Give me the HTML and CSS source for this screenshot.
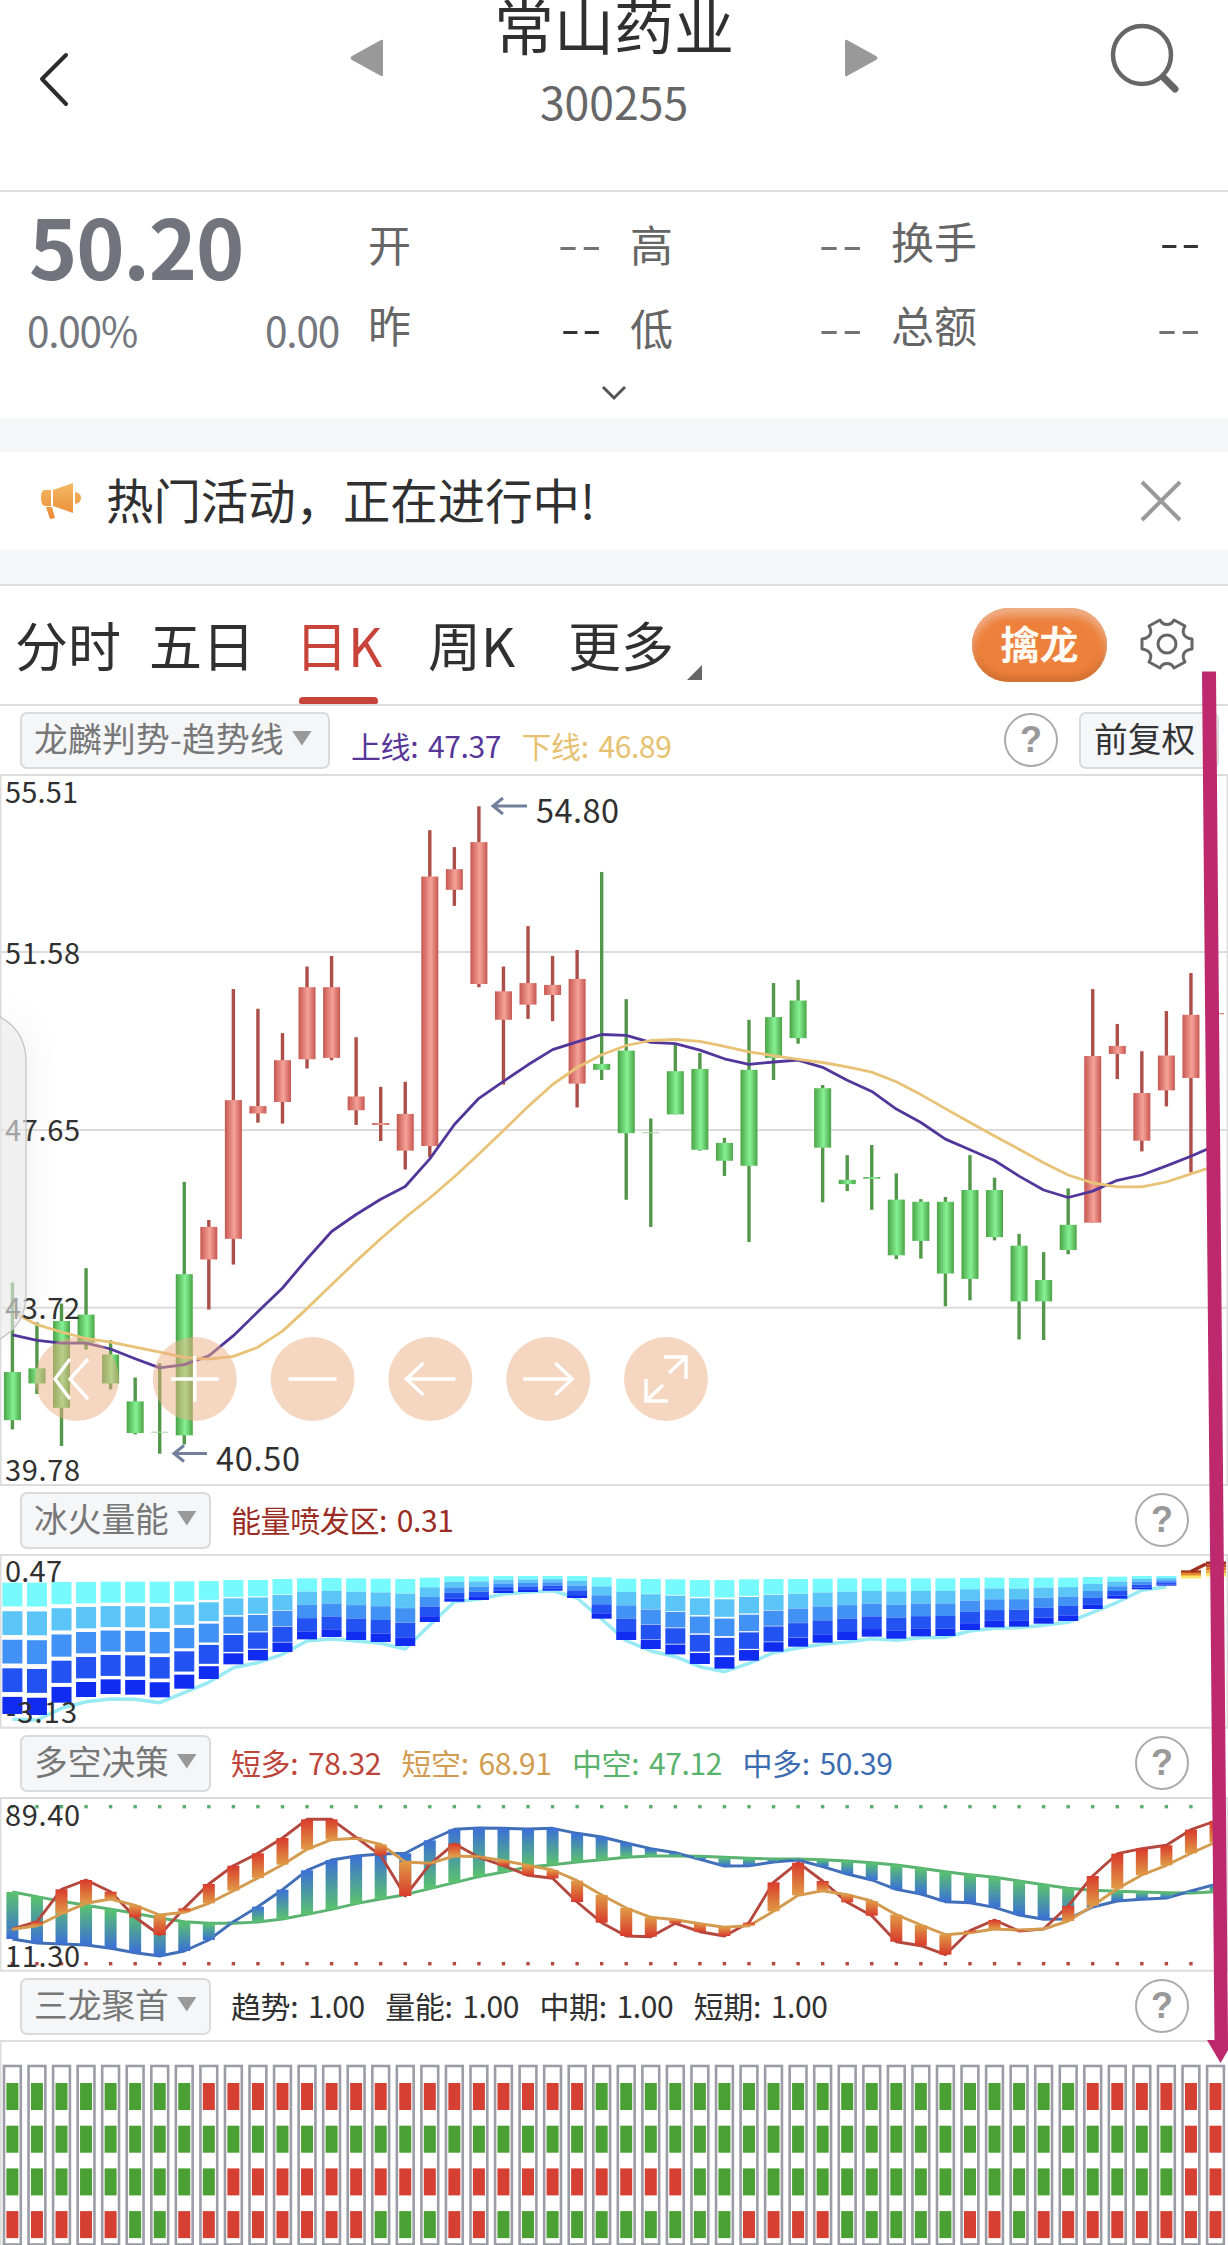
FILE: index.html
```html
<!DOCTYPE html>
<html lang="zh-CN">
<head>
<meta charset="utf-8">
<title>常山药业 300255</title>
<link rel="stylesheet" href="styles.css">
</head>
<body>
<div class="app">
  <header class="top">
    <svg class="back" viewBox="0 0 32 56"><path d="M28 4 4 28 28 53" /></svg>
    <svg class="tri" viewBox="0 0 36 40"><path d="M34 3v34q0 2-2 1L3 22q-3-2 0-4L32 2q2-1 2 1z"/></svg>
    <div class="name"><h1>常山药业</h1><p>300255</p></div>
    <svg class="tri" viewBox="0 0 36 40"><path d="M2 3v34q0 2 2 1l29-16q3-2 0-4L4 2Q2 1 2 3z"/></svg>
    <svg class="search" viewBox="0 0 72 72"><circle cx="33" cy="33" r="29"/><path class="grip" d="M55 56l11 11"/></svg>
  </header>

  <section class="quote">
    <div class="last">
      <strong>50.20</strong>
      <div class="change"><span>0.00%</span><span>0.00</span></div>
    </div>
    <dl class="stats">
      <div><dt class="low">开</dt><dd>--</dd></div>
      <div><dt class="low">高</dt><dd>--</dd></div>
      <div><dt>换手</dt><dd class="dark up">--</dd></div>
      <div><dt>昨</dt><dd class="dark">--</dd></div>
      <div><dt class="low">低</dt><dd>--</dd></div>
      <div><dt>总额</dt><dd>--</dd></div>
    </dl>
    <svg class="expand" viewBox="0 0 28 18"><path d="M3 3l11 11L25 3"/></svg>
  </section>

  <section class="notice">
    <svg class="horn" viewBox="0 0 44 40">
      <defs><linearGradient id="hornFill" x1="0" y1="0" x2="0" y2="1"><stop offset="0" stop-color="#f3b863"/><stop offset="1" stop-color="#ec8a35"/></linearGradient></defs>
      <path fill="url(#hornFill)" d="M5 9h7v16H6q-4-1-4-8t3-8zM14 9 34 2v30L14 25zM36 11q6 1 6 6t-6 6zM7 26h6l3 11-5 1q-2-6-4-12z"/>
    </svg>
    <p>热门活动，正在进行中!</p>
    <svg class="close" viewBox="0 0 44 44"><path d="M3 3l38 38M41 3 3 41"/></svg>
  </section>

  <nav class="tabs">
    <span class="t1">分时</span><span class="t2">五日</span><span class="t3 on">日K</span><span class="t4">周K</span><span class="t5">更多</span>
    <i class="corner"></i>
    <b class="pill">擒龙</b>
    <svg class="gear" viewBox="-28 -28 56 56">
      <path d="M7-24 18-18C14-11 17-6 25-5V5C17 6 14 11 18 18L7 24C4 18-4 18-7 24L-18 18C-14 11-17 6-25 5V-5C-17-6-14-11-18-18L-7-24C-4-18 4-18 7-24Z"/><circle r="9"/>
    </svg>
  </nav>

  <div class="head first">
    <span class="chip wide">龙麟判势-趋势线<i></i></span>
    <div class="legend"><span class="violet">上线: 47.37</span><span class="gold">下线: 46.89</span></div>
    <span class="help">?</span><span class="chip adj">前复权</span>
  </div>
  <svg class="chart" id="kline" viewBox="0 774 1228 712" height="712"></svg>

  <div class="head">
    <span class="chip">冰火量能<i></i></span>
    <div class="legend"><span class="brick">能量喷发区: 0.31</span></div>
    <span class="help">?</span>
  </div>
  <svg class="chart" id="energy" viewBox="0 1554 1228 175" height="175"></svg>

  <div class="head">
    <span class="chip">多空决策<i></i></span>
    <div class="legend"><span class="red">短多: 78.32</span><span class="amber">短空: 68.91</span><span class="green">中空: 47.12</span><span class="blue">中多: 50.39</span></div>
    <span class="help">?</span>
  </div>
  <svg class="chart" id="decide" viewBox="0 1797 1228 175" height="175"></svg>

  <div class="head">
    <span class="chip">三龙聚首<i></i></span>
    <div class="legend"><span>趋势: 1.00</span><span>量能: 1.00</span><span>中期: 1.00</span><span>短期: 1.00</span></div>
    <span class="help">?</span>
  </div>
  <svg class="chart" id="dragons" viewBox="0 2040 1228 205" height="205"></svg>

  <svg class="marker" viewBox="0 0 1228 2245"><path d="M1202 671.5H1216L1228 2040H1234L1220.5 2063 1207 2040H1214.5Z"/></svg>
</div>
<script src="charts.js"></script>
</body>
</html>
```
FILE: styles.css
```css
* { box-sizing: border-box; }
body { margin: 0; background: #fff; color: #303030; font-family: "Noto Sans CJK SC", "Noto Sans", sans-serif; }
h1, p, dl, dd { margin: 0; font-weight: 400; }
svg { display: block; flex: none; }
.app { position: relative; width: 1228px; height: 2245px; overflow: hidden; }

.top { display: flex; height: 192px; border-bottom: 2px solid #dcdcdc; align-items: flex-start; }
.back { width: 32px; height: 56px; margin: 51px 0 0 38px; fill: none; stroke: #2c2c2c; stroke-width: 4; stroke-linecap: round; stroke-linejoin: round; }
.tri { width: 36px; height: 40px; fill: #999; margin: 38px 0 0 279px; }
.name { width: 240px; margin: -20px 0 0 109px; text-align: center; }
.name h1 { font-size: 60px; line-height: 88px; white-space: nowrap; }
.name p { font-size: 44.5px; line-height: 66px; color: #666; }
.name + .tri { margin-left: 109px; }
.search { width: 72px; height: 72px; margin: 22px 0 0 230px; fill: none; stroke: #666; stroke-width: 4.5; }
.search .grip { stroke-width: 7; stroke-linecap: round; }

.quote { display: grid; grid-template-columns: 368px 1fr; grid-template-rows: 190px 36px; height: 226px; color: #666; }
.last strong { display: block; height: 109px; padding: 12px 0 0 29px; font-size: 82px; line-height: 82px; color: #71747c; letter-spacing: -1.2px; }
.change { display: flex; justify-content: space-between; padding: 0 29px 0 27px; font-size: 40.5px; line-height: 58px; color: #73767d; letter-spacing: -1.2px; }
.stats { display: grid; grid-template-columns: 231px 261px 338px; grid-template-rows: 84px 84px; padding-top: 8px; font-size: 43px; }
.stats div { display: flex; justify-content: space-between; line-height: 84px; white-space: nowrap; }
.stats div:nth-child(3n+2) dt { padding-left: 31px; }
.stats div:nth-child(3n) dt { padding-left: 31px; }
.stats dt { line-height: 81px; }
.stats dt.low { line-height: 86px; }
.stats dd { color: #737373; letter-spacing: 2px; margin-right: -4px; line-height: 84px; transform: scaleX(1.38); transform-origin: calc(100% - 4px) 50%; }
.stats dd.dark { color: #333; transform: scaleX(1.28); }
.stats dd.up { line-height: 80px; }
.expand { grid-column: 1 / 3; justify-self: center; width: 28px; height: 18px; fill: none; stroke: #555; stroke-width: 3; margin-top: 2px; }

.notice { display: flex; align-items: center; height: 166px; border: solid #f6f7f9; border-width: 34px 0; }
.horn { width: 44px; height: 40px; margin-left: 39px; }
.notice p { width: 1056px; margin-top: -4px; padding-left: 23px; font-size: 47.4px; line-height: 60px; white-space: nowrap; flex: none; }
.close { width: 44px; height: 44px; fill: none; stroke: #999; stroke-width: 4; }

.tabs { display: flex; height: 122px; border: solid #dcdcdc; border-width: 2px 0; font-size: 53px; line-height: 117px; white-space: nowrap; }
.tabs span { flex: none; position: relative; }
.t1 { width: 134px; padding-left: 15px; }
.t2 { width: 135px; margin-left: 15px; }
.t3 { width: 79px; margin-left: 11px; }
.t3.on { color: #c8433a; }
.t3.on::after { content: ""; position: absolute; left: 4px; bottom: 0; width: 79px; height: 7px; border-radius: 4px 4px 2px 2px; background: #c8433a; }
.t4 { width: 90px; margin-left: 54px; }
.t5 { width: 106px; margin-left: 50px; }
.corner { width: 15px; height: 15px; margin: 79px 0 0 13px; background: #666; clip-path: polygon(100% 0, 100% 100%, 0 100%); }
.pill { width: 135px; height: 74px; margin: 22px 0 0 270px; border-radius: 37px; background: #ed803b; box-shadow: inset 0 7px 8px #efb18a, inset 0 -5px 7px #cf6d30; color: #fffaf2; font-size: 39px; line-height: 69px; text-align: center; }
.gear { width: 56px; height: 56px; margin: 30px 0 0 32px; fill: none; stroke: #666; stroke-width: 3; stroke-linejoin: round; }

.head { display: flex; align-items: center; height: 68px; }
.chip { display: flex; align-items: center; flex: none; width: 191px; height: 57px; margin-left: 20px; padding: 0 0 4px 12px; border: 2px solid #dadada; border-radius: 7px; background: #f5f6f8; color: #777; font-size: 33.7px; line-height: 50px; white-space: nowrap; }
.chip.wide { width: 310px; letter-spacing: .3px; }
.chip i { width: 20px; height: 15px; margin-left: 8px; background: #999; clip-path: polygon(0 0, 100% 0, 50% 100%); }
.chip.adj { width: 140px; margin-left: 21px; color: #333; padding-left: 13px; }
.legend { display: flex; flex: 1; gap: 20.5px; padding: 0 0 3px 20px; font-size: 30px; line-height: 44px; white-space: nowrap; letter-spacing: -.4px; word-spacing: 3.6px; }
.first .legend { padding: 10px 0 0 21px; }
.help { flex: none; width: 54px; height: 54px; margin: 0 39px 0 0; border: 2px solid #aaa; border-radius: 50%; color: #999; font: 700 36px/49px "Liberation Sans", sans-serif; text-align: center; }
.first .help { margin-right: 0; }
.first .chip.adj { margin-right: 9px; }
.violet { color: #563697; } .gold { color: #e6c16f; } .brick { color: #9b2c23; }
.red { color: #bd453b; } .amber { color: #d29c52; } .green { color: #59b36c; } .blue { color: #3c6cb0; }
.chart { width: 1228px; }
.chart text { font-size: 29px; fill: #303030; }
.marker { position: absolute; left: 0; top: 0; width: 1228px; height: 2245px; fill: #bd296c; pointer-events: none; }
```
FILE: charts.js
```js
const STEP = 24.553, X0 = 12.4;
const cx = i => X0 + i * STEP;
const rect = (x, y, w, h, fill, extra = '') => `<rect x="${x.toFixed(2)}" y="${y.toFixed(2)}" width="${w}" height="${Math.max(h, 0).toFixed(2)}" fill="${fill}" ${extra}/>`;
const line = (pts, color, w = 2.8) => `<polyline points="${pts.map((y, i) => cx(i).toFixed(1) + ',' + y.toFixed(1)).join(' ')}" fill="none" stroke="${color}" stroke-width="${w}" stroke-linejoin="round"/>`;
const rule = y => rect(0, y - 1, 1228, 2, '#dcdcdc');
const frame = (a, b) => rule(a) + rule(b) + rect(0, a, 1.5, b - a, '#dcdcdc') + rect(1226.5, a, 1.5, b - a, '#dcdcdc');
const label = (t, x, y, w, size = 29) => `<text x="${x}" y="${y}" textLength="${w}" style="font-size:${size}px">${t}</text>`;
const put = (id, s) => { document.getElementById(id).innerHTML = s; };

/* Daily candles: [up, high, body top, body bottom, low] */
const early = v => 770 + v / 2.1778, late = v => 650 + v / 1.8667;
const at = (v, i) => (i < 33 ? early(v) : late(v));
const candles = [
[0,1116,1311,1416,1436],[0,1203,1303,1336,1359],[0,1162,1200,1389,1472],[0,1085,1186,1247,1262],[0,1242,1273,1336,1349],
[0,1323,1375,1444,1447],[0,1292,1441,1443,1489],[0,897,1098,1449,1469],[1,980,995,1066,1175],[1,477,719,1021,1077],
[1,520,732,748,768],[1,573,632,723,770],[1,428,473,630,650],[1,405,473,627,632],[1,582,711,741,773],
[1,690,769,773,808],[1,679,749,829,870],[1,131,232,819,843],[1,168,216,261,296],[1,79,157,466,473],
[1,428,482,544,685],[1,340,464,511,542],[1,405,468,490,547],[1,392,455,683,735],[0,222,640,653,675],
[0,499,611,791,936],[0,759,789,791,995],[0,595,656,750,750],[0,616,651,827,829],[0,801,812,851,884],
[0,544,653,862,1028],[0,464,538,627,675],[0,457,502,584,596],[0,812,818,929,1031],[0,943,989,997,1010],
[0,924,984,987,1045],[0,977,1026,1130,1137],[0,1025,1030,1103,1136],[0,1021,1030,1164,1225],[0,943,1008,1174,1214],
[0,985,1008,1096,1102],[0,1090,1112,1216,1287],[0,1124,1176,1216,1288],[0,1005,1073,1120,1128],[1,633,758,1069,1069],
[1,698,739,754,801],[1,749,827,916,936],[1,674,757,822,852],[1,603,681,799,975],[1,678,678,680,680]];
const upper = [1230,1242,1248,1248,1261,1282,1302,1295,1276,1232,1180,1128,1065,1005,968,935,907,847,772,715,678,642,609,592,576,578,593,596,610,629,641,636,632,779,803,824,857,882,913,933,953,982,1008,1022,1010,990,980,963,945,925].map(at);
const lower = [1180,1208,1224,1238,1246,1257,1268,1279,1283,1277,1257,1222,1173,1121,1070,1021,975,932,886,836,785,733,685,648,620,600,589,587,591,602,614,622,630,770,778,788,806,830,856,882,907,932,957,980,995,1002,1002,993,978,963].map(at);
const grad = (id, a, b, c) => `<linearGradient id="${id}"><stop offset="0" stop-color="${a}"/><stop offset=".55" stop-color="${b}"/><stop offset="1" stop-color="${c}"/></linearGradient>`;
let k = '<defs>' + grad('up', '#c65750', '#f6a299', '#c65750') + grad('dn', '#4aa344', '#86f295', '#4aa344') +
  '<filter id="soft" x="-150%" y="-20%" width="400%" height="140%"><feGaussianBlur stdDeviation="16"/></filter></defs>';
k += frame(775, 1485) + rule(952) + rule(1130) + rule(1307.7);
candles.forEach(([up, h, t, b, l], i) => {
  const [H, T, B, L] = [h, t, b, l].map(v => at(v, i));
  k += rect(cx(i) - 1.7, H, 3.4, L - H, up ? '#ac4f48' : '#53974a');
  const faint = i === 6 || i === 26;
  k += rect(cx(i) - 8.5, T, 17, Math.max(B - T, 1), faint ? '#a5d6a0' : `url(#${up ? 'up' : 'dn'})`);
});
k += line(upper, '#53369a') + line(lower, '#e8c276');
k += label('55.51', 5, 802.5, 73) + label('51.58', 5, 963.5, 75) + label('47.65', 5, 1140.5, 75) + label('43.72', 5, 1319, 75) + label('39.78', 5, 1480.5, 75);
k += label('54.80', 536, 822.5, 83, 32.5) + label('40.50', 216, 1470.5, 84, 32.5);
k += '<path d="M527 806H494M503 798l-10 8 10 8M207 1453.500H175M184 1445.500l-10 8 10 8" fill="none" stroke="#73809c" stroke-width="3"/>';
/* translucent drawer handle on the left edge */
k += '<path d="M0 1016Q26 1030 26 1062V1295Q26 1325 0 1340Z" fill="#777" opacity=".14" filter="url(#soft)"/>';
k += '<path d="M-2 1016Q26 1030 26 1062V1295Q26 1325-2 1340Z" fill="rgba(236,236,236,.6)" stroke="#c4c4c4" stroke-width="1.3"/>';
const icons = ['M-7-20-22 0-7 20M11-20-7 0 11 20', 'M-24 0H24M0-23V23', 'M-24 0H24', 'M25 0H-23M-7-16-24 0-7 16', 'M-25 0H23M7-16 24 0 7 16', 'M-2-22H20V0M20-22 3-6M-20 0V22H2M-20 22-3 6'];
icons.forEach((d, i) => {
  k += `<g transform="translate(${77 + i * 117.8} 1379)"><circle r="42" fill="#ebad81" opacity=".5"/><path d="${d}" fill="none" stroke="#fff" stroke-width="3.4"/></g>`;
});
put('kline', k);

/* Energy columns hang from the zero line in five shades */
const y2 = v => 1470 + v / 3;
const tops = [338,338,336,336,335,335,335,334,333,330,330,327,325,324,325,326,327,323,319,319,318,318,318,318,322,326,327,328,330,330,328,327,327,326,325,325,325,325,325,324,323,324,323,323,321,320,318,318];
const ends = [732,735,698,681,672,674,682,656,627,583,571,546,508,501,510,516,528,456,395,390,369,366,362,384,446,510,537,553,582,596,572,545,530,518,510,500,506,499,498,480,472,470,461,453,417,386,358,347];
const tail = [748,750,715,695,687,688,698,668,637,593,578,553,513,507,513,520,537,465,395,388,372,366,362,384,448,512,543,560,590,605,580,548,534,523,516,506,511,503,502,483,475,473,466,457,427,397,361,350];
const shades = ['#76fafd', '#5bc5f8', '#4192f4', '#2252f2', '#102cf1'];
let e = frame(1555, 1727.7) + line(tail.map(y2), '#98eaf4', 3.5);
tops.forEach((t, i) => {
  const total = ends[i] - t, pitch = total / 4.6, gap = Math.max(0, (pitch - 42) * 0.33);
  shades.forEach((c, s) => {
    const a = t + s * pitch, b = s === 4 ? ends[i] : a + pitch - gap;
    e += rect(cx(i) - 10, y2(a), 20, (b - a) / 3, c);
  });
});
e += rect(1181, 1572.5, 20, 6, '#fbe56b') + rect(1181, 1572, 20, 3.5, '#e68a2e') + rect(1181, 1570.3, 20, 2.4, '#a63b22');
['#a0301f', '#bd4a24', '#da7a2b', '#efaa3f', '#fbe56b'].forEach((c, i) => { e += rect(1206, 1561.5 + i * 3, 20, 3, c); });
e += '<path d="M1191 1571.500 1206 1564" stroke="#a0301f" stroke-width="3.500"/>';
e += label('0.47', 5, 1582, 57) + label('-3.13', 6, 1723, 71);
put('energy', e);

/* Long/short lines, with bars joining each pair */
const y3 = v => 1720 + v / 3;
const R = [627,605,508,480,515,592,645,565,492,437,400,354,298,298,352,406,528,433,371,412,437,466,475,546,608,648,650,610,635,648,608,487,428,483,547,587,665,677,704,632,600,633,627,558,468,401,386,376,329,303].map(y3);
const O = [628,617,581,550,537,556,585,577,550,512,474,434,388,359,355,373,426,430,408,410,422,436,450,482,525,564,592,599,611,622,617,574,526,512,524,543,584,615,644,638,627,630,627,603,557,506,465,436,400,367].map(y3);
const G = [516,530,544,556,568,580,594,605,610,610,606,597,583,568,551,537,524,506,488,470,456,441,434,426,419,412,408,408,409,412,415,417,417,419,423,428,435,445,455,464,472,483,494,505,511,514,516,518,519,515].map(y3);
const B = [657,669,672,675,685,698,708,693,660,605,560,509,451,420,408,402,400,361,328,324,325,327,325,340,351,369,386,398,418,438,437,426,420,440,462,480,508,522,545,548,562,585,598,597,561,543,538,534,513,493].map(y3);
const vgrad = (id, a, b) => `<linearGradient id="${id}" x2="0" y2="1"><stop offset="0" stop-color="${a}"/><stop offset="1" stop-color="${b}"/></linearGradient>`;
let d = '<defs>' + vgrad('ro', '#d83b2d', '#e09a45') + vgrad('or', '#e09a45', '#d83b2d') + vgrad('gb', '#5ac26e', '#3c70d6') + vgrad('bg', '#3c70d6', '#5ac26e') + '</defs>' + frame(1798, 1970.7);
const join = (p, q, a, b) => p.map((y, i) => rect(cx(i) - 6, Math.min(y, q[i]), 12, Math.abs(y - q[i]), `url(#${y < q[i] ? a : b})`)).join('');
d += line(G, '#5ab370', 2.9) + line(B, '#416fb7', 2.9) + join(G, B, 'gb', 'bg');
d += line(R, '#b4473e', 2.9) + line(O, '#d39a50', 2.9) + join(R, O, 'ro', 'or');
for (let i = 0; i < 49; i++) d += rect(cx(i) - 1.7, 1805, 3.4, 3.4, '#59ae70') + rect(cx(i) - 1.7, 1962, 3.4, 3.4, '#b4473e');
d += label('89.40', 5, 1825.7, 75) + label('11.30', 5, 1966.5, 75);
put('decide', d);

/* Four signal rows per day: 1 = red, 0 = green, run-length encoded */
const rows = [[[0, 8], [1, 16], [0, 20], [1, 6]], [[0, 48], [1, 2]], [[0, 9], [1, 19], [0, 20], [1, 2]],
  [[1, 5], [0, 2], [1, 8], [0, 3], [1, 2], [0, 10], [1, 4], [0, 5], [1, 2], [0, 1], [1, 8]]];
let g = rule(2041) + rect(0, 2041, 1.5, 204, '#dcdcdc');
for (let i = 0; i < 50; i++) g += rect(cx(i) - 8.4, 2066, 16.8, 178.5, 'none', 'stroke="#9b9ca5" stroke-width="2.6"');
rows.forEach((runs, r) => {
  let i = 0;
  runs.forEach(([v, n]) => { for (; n--; i++) g += rect(cx(i) - 6, 2083 + r * 42.7, 12, 27, v ? '#d54033' : '#4aa032'); });
});
put('dragons', g);
```
